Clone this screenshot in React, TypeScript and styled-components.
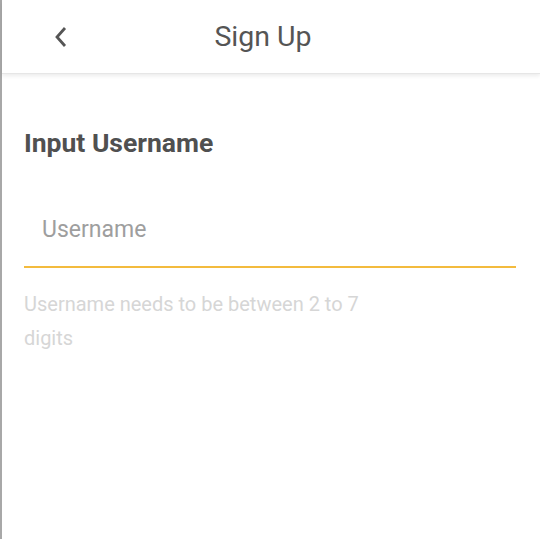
import React, { ReactElement } from 'react';
import styled, { createGlobalStyle } from 'styled-components';

const GlobalStyle = createGlobalStyle`
  html, body {
    margin: 0;
    padding: 0;
    background: #fff;
  }
  body {
    font-family: Roboto, "Liberation Sans", sans-serif;
  }
`;

const Page = styled.div`
  min-height: 539px;
  border-left: 2px solid #a8a8a8;
  background: #fff;
  box-sizing: border-box;
`;

const Header = styled.header`
  height: 73px;
  display: grid;
  grid-template-columns: 80px 1fr 96px;
  align-items: center;
  box-shadow: 0 2px 4px rgba(0, 0, 0, 0.08);
  border-bottom: 1px solid #e6e6e6;
`;

const BackButton = styled.button`
  border: 0;
  background: none;
  padding: 0;
  margin-left: 47px;
  width: 24px;
  height: 24px;
  display: flex;
  align-items: center;
  justify-content: center;
  color: #555;
  cursor: pointer;
`;

const Title = styled.h1`
  margin: 0;
  text-align: center;
  font-size: 28.5px;
  font-weight: 400;
  color: #555;
`;

const Body = styled.main`
  padding: 0 22px 0 22px;
  margin-right: 2px;
`;

const Heading = styled.h2`
  margin: 54px 0 0;
  font-size: 26.5px;
  font-weight: 700;
  color: #505050;
  line-height: 30px;
`;

const Field = styled.input`
  display: block;
  width: 100%;
  box-sizing: border-box;
  margin-top: 58px;
  padding: 0 0 22px 18px;
  border: none;
  border-bottom: 2px solid #f3bb3e;
  border-radius: 0;
  outline: none;
  font-family: Roboto, "Liberation Sans", sans-serif;
  font-size: 23px;
  line-height: 28px;
  color: #333;
  background: transparent;

  &::placeholder {
    color: #9e9e9e;
  }
`;

const Hint = styled.p`
  margin: 19px 0 0;
  max-width: 380px;
  font-size: 20px;
  line-height: 34px;
  color: #d6d6d6;
`;

const App = (): ReactElement => (
  <>
    <GlobalStyle />
    <Page>
      <Header>
        <BackButton aria-label="Back">
          <svg width="16" height="22" viewBox="0 0 16 22" fill="none">
            <path d="M12 2 L4 11 L12 20" stroke="#555" strokeWidth="2.8" />
          </svg>
        </BackButton>
        <Title>Sign Up</Title>
        <span />
      </Header>
      <Body>
        <Heading>Input Username</Heading>
        <Field placeholder="Username" />
        <Hint>Username needs to be between 2 to 7 digits</Hint>
      </Body>
    </Page>
  </>
);

export default App;
